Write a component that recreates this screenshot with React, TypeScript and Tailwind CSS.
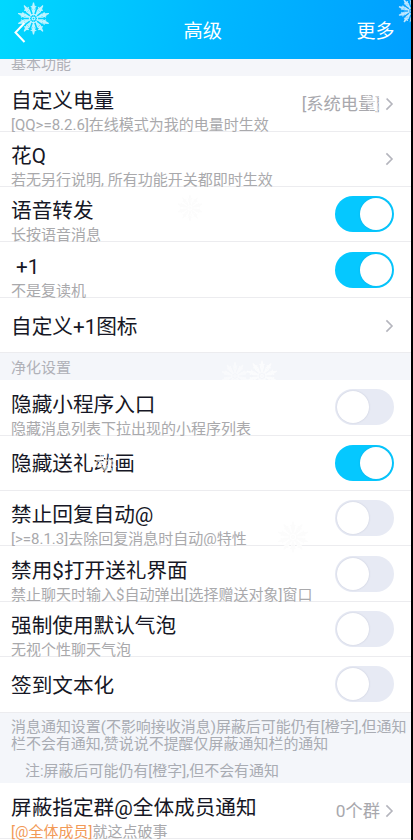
import { useState } from 'react';

type Row = {
  title: string;
  desc?: string;
  accent?: string;
  value?: string;
  on?: boolean;
};

const basicRows: Row[] = [
  { title: '自定义电量', desc: '[QQ>=8.2.6]在线模式为我的电量时生效', value: '[系统电量]' },
  { title: '花Q', desc: '若无另行说明, 所有功能开关都即时生效' },
  { title: '语音转发', desc: '长按语音消息', on: true },
  { title: ' +1', desc: '不是复读机', on: true },
  { title: '自定义+1图标' },
];

const cleanRows: Row[] = [
  { title: '隐藏小程序入口', desc: '隐藏消息列表下拉出现的小程序列表', on: false },
  { title: '隐藏送礼动画', on: true },
  { title: '禁止回复自动@', desc: '[>=8.1.3]去除回复消息时自动@特性', on: false },
  { title: '禁用$打开送礼界面', desc: '禁止聊天时输入$自动弹出[选择赠送对象]窗口', on: false },
  { title: '强制使用默认气泡', desc: '无视个性聊天气泡', on: false },
  { title: '签到文本化', on: false },
];

const notifyRows: Row[] = [
  { title: '屏蔽指定群@全体成员通知', accent: '[@全体成员]', desc: '就这点破事', value: '0个群' },
];

const Chevron = () => (
  <svg className="h-[14px] w-[9px] shrink-0" viewBox="0 0 9 14" fill="none" stroke="#b4b5bd" strokeWidth="1.6">
    <path d="M1.4 1.4 L7 7 L1.4 12.6" />
  </svg>
);

const Snowflake = ({ className }: { className: string }) => (
  <svg className={className} viewBox="-17 -17 34 34" fill="none" stroke="currentColor" strokeWidth="1.1">
    <circle r="4" />
    <circle r="1.4" />
    {[0, 36, 72, 108, 144, 180, 216, 252, 288, 324].map((a) => (
      <g key={a} transform={`rotate(${a})`}>
        <path d="M0 -4 L-1.5 -9 L0 -15.5 L1.5 -9 Z M0 -5 V-15.5 M-2.6 -12 L0 -9.5 L2.6 -12" />
      </g>
    ))}
  </svg>
);

const Toggle = ({ initial }: { initial: boolean }) => {
  const [on, setOn] = useState(initial);

  return (
    <button
      role="switch"
      aria-checked={on}
      onClick={() => setOn(!on)}
      className={`flex h-9 w-[59px] shrink-0 items-center rounded-full px-[2px] ${
        on ? 'justify-end bg-[#05c8ff]' : 'justify-start bg-[#e7eaf4]'
      }`}
    >
      <span className="size-8 rounded-full bg-white shadow-[0_0_2px_rgba(60,70,110,0.2)]" />
    </button>
  );
};

const SettingRow = ({ row }: { row: Row }) => (
  <div className="flex h-[55.4px] shrink-0 items-center justify-between border-b border-[#ececef] bg-white pr-[16.5px] pl-[11px]">
    <div className={`flex h-full flex-col whitespace-pre ${row.desc ? 'pt-[12.4px]' : 'justify-center pt-[4px]'}`}>
      <span className="text-[20.65px] leading-[25px] text-[#161725]">{row.title}</span>
      {row.desc && (
        <span className="text-[15px] leading-[22.4px] text-[#a9a9ac]">
          {row.accent && <span className="text-[#f29a57]">{row.accent}</span>}
          {row.desc}
        </span>
      )}
    </div>
    {row.on !== undefined ? (
      <Toggle initial={row.on} />
    ) : (
      <div className="flex items-center gap-[5px] pt-[1px]">
        {row.value && <span className="pt-[1px] text-[17.3px] leading-5 text-[#a8a8ad]">{row.value}</span>}
        <Chevron />
      </div>
    )}
  </div>
);

export default function App() {
  return (
    <div className="relative h-[840px] w-[413px] overflow-hidden bg-black pr-[2.5px] font-[Roboto,'Noto_Sans_CJK_SC',sans-serif]">
      <div className="flex h-full flex-col bg-white">
        {/* Title bar */}
        <header className="z-10 grid h-[59px] shrink-0 grid-cols-3 items-center bg-linear-100 from-[#00d8ff] via-[#00b8ff] to-[#009fff] pt-[5px] pr-[16px] pl-[14px] text-[19px] text-white">
          <svg className="h-[21px] w-[12px]" viewBox="0 0 12 21" fill="none" stroke="white" strokeWidth="2">
            <path d="M10.5 1 L1.5 10.5 L10.5 20" />
          </svg>
          <h1 className="pr-[3px] text-center text-[19.3px]">高级</h1>
          <button className="justify-self-end">更多</button>
        </header>

        {/* Section title partly scrolled under the bar */}
        <div className="-mt-[10px] flex h-[27.3px] shrink-0 items-end bg-[#f5f6fa] pb-[1px] pl-[11px]">
          <span className="text-[15px] leading-[22px] text-[#b0b1b8]">基本功能</span>
        </div>
        {basicRows.map((row) => (
          <SettingRow key={row.title} row={row} />
        ))}

        <div className="flex h-[27px] shrink-0 items-center bg-[#f4f6fa] pt-[2px] pl-[11px]">
          <span className="text-[15px] leading-[22px] text-[#b0b1b8]">净化设置</span>
        </div>
        {cleanRows.map((row) => (
          <SettingRow key={row.title} row={row} />
        ))}

        <div className="h-[70.6px] shrink-0 bg-[#f4f6fa] pt-[6px] pl-[11px] text-[14.97px] leading-[17.5px] whitespace-nowrap text-[#a9acb3]">
          <p>消息通知设置(不影响接收消息)屏蔽后可能仍有[橙字],但通知</p>
          <p>栏不会有通知,赞说说不提醒仅屏蔽通知栏的通知</p>
          <p className="pt-[9px] pl-[14px]">注:屏蔽后可能仍有[橙字],但不会有通知</p>
        </div>
        {notifyRows.map((row) => (
          <SettingRow key={row.title} row={row} />
        ))}
      </div>

      {/* Falling snow */}
      <div className="pointer-events-none absolute inset-y-0 left-0 z-20 w-[410.5px] overflow-hidden text-white">
        <Snowflake className="absolute top-[1px] left-[16px] size-[35px] opacity-75" />
        <Snowflake className="absolute -top-[4px] left-[397px] size-[30px] opacity-75" />
        <Snowflake className="absolute top-[86px] left-[363px] size-[28px] opacity-60" />
        <Snowflake className="absolute top-[451px] left-[94px] size-[24px] opacity-80" />
        <Snowflake className="absolute top-[361px] left-[220px] size-[30px] opacity-50" />
        <Snowflake className="absolute top-[359px] left-[245px] size-[34px] opacity-70" />
        <Snowflake className="absolute top-[520px] left-[276px] size-[34px] text-[#fcfcfc]" />
        <Snowflake className="absolute top-[194px] left-[176px] size-[28px] text-[#fcfcfc]" />
      </div>
    </div>
  );
}
